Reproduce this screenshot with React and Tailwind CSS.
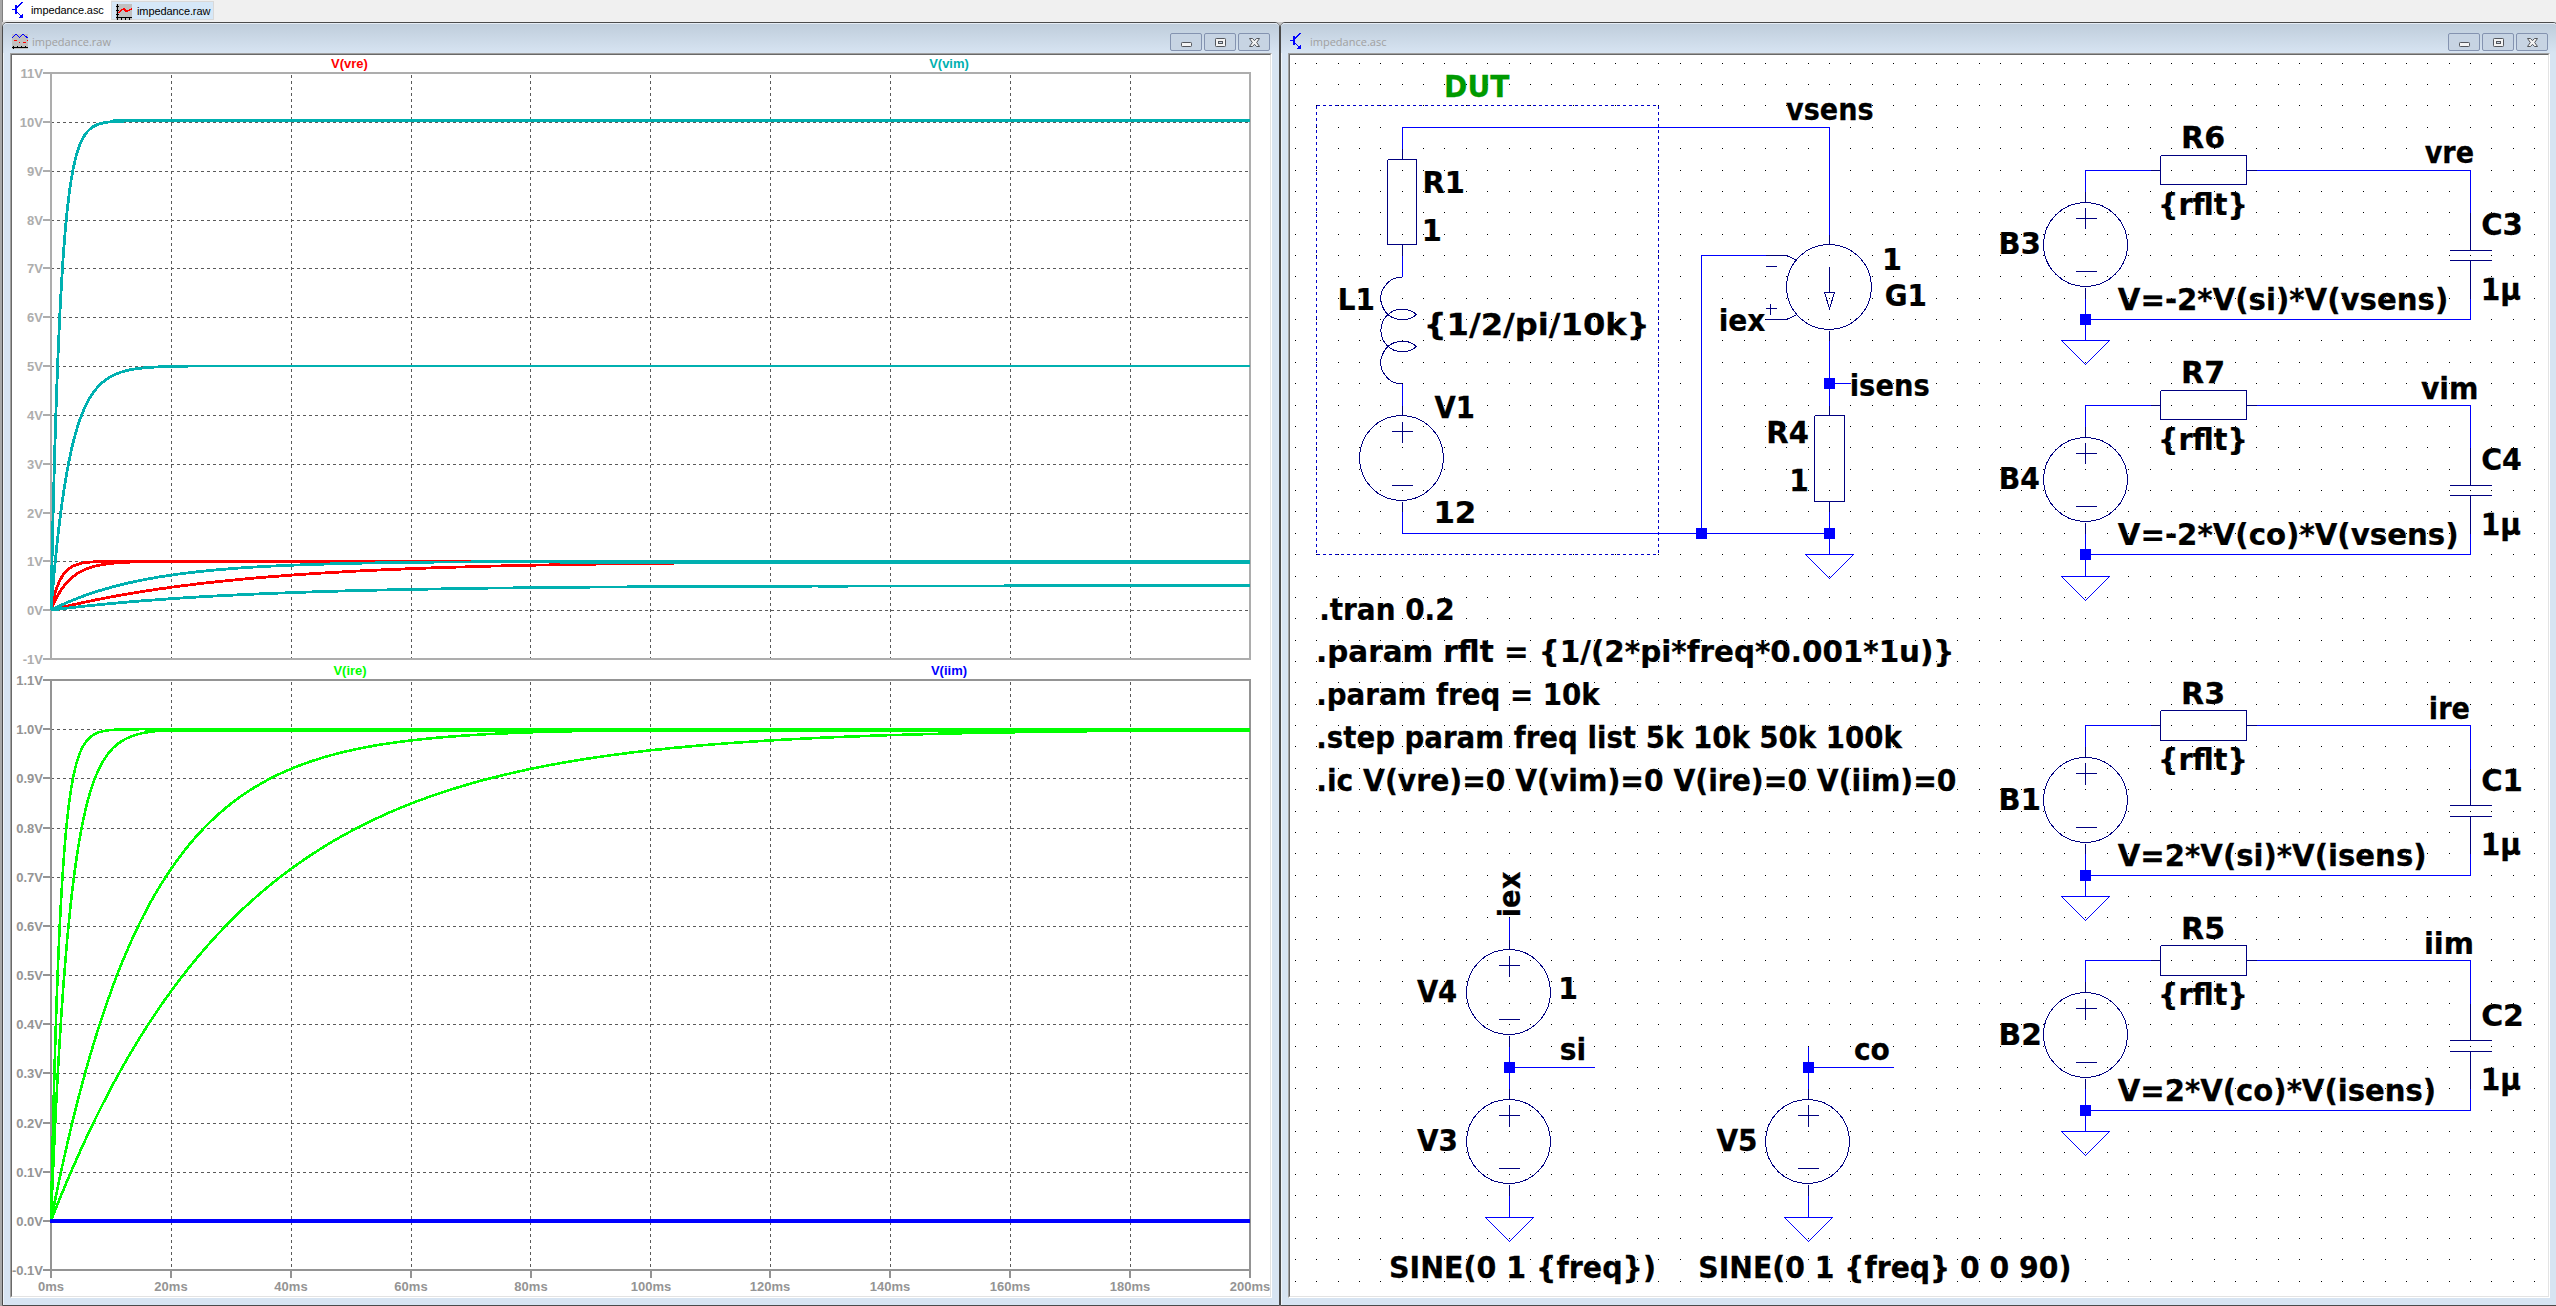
import React from "react";

/* ---------- shared helpers ---------- */

const PITCH = 21.3667;
const X = (u) => 1295.41 + PITCH * u;
const Y = (v) => 63.21 + PITCH * v;
const px = (u) => Math.floor(X(u)) + 0.5;
const py = (v) => Math.floor(Y(v)) + 0.5;

const NAVY = "#000080";
const BLUE = "#0000ff";
const LABEL_FONT = "'DejaVu Sans Condensed', 'DejaVu Sans', sans-serif";

const measureCtx = document.createElement("canvas").getContext("2d");

/* Bold schematic label whose ink spans x1..x2 */
function Label({ t, x1, x2, y, fill = "#000000", size = 31, vertical = false }) {
  measureCtx.font = `bold ${size}px ${LABEL_FONT}`;
  const m = measureCtx.measureText(t);
  const left = m.actualBoundingBoxLeft;
  const ink = left + m.actualBoundingBoxRight;
  const s = (x2 - x1) / ink;
  const place = vertical
    ? `translate(${y} ${x2 - left * s}) rotate(-90) scale(${s} 1)`
    : `translate(${x1 + left * s + 0.4} ${y - 0.4}) scale(${s} 1)`;
  return (
    <text
      transform={place}
      fill={fill}
      stroke={fill}
      strokeWidth="0.25"
      fontFamily={LABEL_FONT}
      fontWeight="bold"
      fontSize={size}
      xmlSpace="preserve"
    >
      {t}
    </text>
  );
}

/* ---------- icons ---------- */

function TransistorIcon() {
  return (
    <svg width="16" height="16" viewBox="0 0 16 16" fill="none" stroke="#0000ff" shapeRendering="crispEdges">
      <path d="M0 7.5H4" />
      <path d="M4 3V12" strokeWidth="2" />
      <path d="M5 5.5L10.5 0M5 10L11 16" />
      <path d="M10.5 11.5V15.5H7z" fill="#0000ff" stroke="none" />
    </svg>
  );
}

function WaveTabIcon() {
  return (
    <svg width="16" height="16" viewBox="0 0 16 16" fill="none" shapeRendering="crispEdges">
      <rect width="16" height="16" fill="#c0c0c0" />
      <path d="M1.5 0V16M0 13.5H16M0 2.5H3M0 6.5H3M0 10.5H3M5.5 13V16M9.5 13V16M13.5 13V16" stroke="#000" />
      <path d="M2.5 9L5.5 5.5L8 5L10.5 7.5L13 6.5L16 4.5" stroke="#ff0000" strokeWidth="1.5" />
    </svg>
  );
}

function WaveTitleIcon() {
  return (
    <svg width="16" height="16" viewBox="0 0 16 16" fill="none" shapeRendering="crispEdges">
      <rect y="1" width="16" height="15" fill="#c0c0c0" />
      <path d="M0 5L4 1L7.5 4.5L11 1L15.5 5" stroke="#0000ff" />
      <path d="M2 7.5H5M7 9.5H8M11 9.5H14M15 7.5H16" stroke="#ff0000" strokeWidth="1.4" />
      <path d="M0 14.5H16M1.5 13V16M5.5 13V15M9.5 13V15M13.5 13V15" stroke="#000" />
    </svg>
  );
}

function WindowButton({ kind }) {
  return (
    <div className="flex h-[18px] w-8 items-center justify-center rounded-[2px] border border-[#8493b0] bg-[#c7d4e3]">
      <svg width="14" height="12" viewBox="0 0 14 12" fill="#f4f4f4" stroke="#53565c">
        {kind === "min" && <rect x="2.5" y="6.5" width="10" height="4" rx="0.8" />}
        {kind === "max" && (
          <g>
            <rect x="2.5" y="2.5" width="10" height="8" rx="0.8" />
            <rect x="5.5" y="5.5" width="4" height="2" fill="#c7d4e3" />
          </g>
        )}
        {kind === "close" && (
          <path d="M2.5 2.5H5.5L7.5 4.7L9.5 2.5H12.5L9.7 6.5L12.5 10.5H9.5L7.5 8.3L5.5 10.5H2.5L5.3 6.5Z" strokeLinejoin="round" />
        )}
      </svg>
    </div>
  );
}

/* ---------- waveform viewer ---------- */

const tx = (ms) => 51 + ms * 5.995;
const topY = (v) => 610.1 - v * 48.83;
const botY = (v) => 1220.8 - v * 491.7;
const TAUS = [31.83, 15.92, 3.183, 1.592];

function curve(yOf, amp, tau) {
  let d = `M${tx(0)} ${yOf(0)}`;
  for (let t = 0.1; t <= 200.01; t += t < 20 ? 0.1 : 1) {
    d += `L${tx(t).toFixed(1)} ${yOf(amp * (1 - Math.exp(-t / tau))).toFixed(1)}`;
  }
  return d;
}

function Pane({ top, bottom, color, labels, step }) {
  const xs = [20, 40, 60, 80, 100, 120, 140, 160, 180];
  return (
    <g shapeRendering="crispEdges">
      {xs.map((t) => (
        <path key={t} d={`M${Math.floor(tx(t) + 0.3) + 0.5} ${top + 2}V${bottom}`} stroke="#5a5a5a" strokeDasharray="3 3" />
      ))}
      {labels.slice(1, -1).map((l, i) => (
        <path key={l} d={`M51 ${Math.round(top + step * (i + 1)) + 0.5}H1249`} stroke="#5a5a5a" strokeDasharray="3 3" />
      ))}
      <rect x="51" y={top} width="1199" height={bottom - top} fill="none" stroke={color} strokeWidth="2" />
      {labels.map((l, i) => (
        <g key={l}>
          <path d={`M43 ${Math.round(top + step * i)}H51`} stroke={color} strokeWidth="2" />
          <text x="43" y={top + step * i + 5} textAnchor="end" fill={color}>
            {l}
          </text>
        </g>
      ))}
    </g>
  );
}

function PlotView() {
  const topLabels = ["11V", "10V", "9V", "8V", "7V", "6V", "5V", "4V", "3V", "2V", "1V", "0V", "-1V"];
  const botLabels = ["1.1V", "1.0V", "0.9V", "0.8V", "0.7V", "0.6V", "0.5V", "0.4V", "0.3V", "0.2V", "0.1V", "0.0V", "-0.1V"];
  const vim = [0.5, 1, 5, 10.02];
  return (
    <svg
      className="block"
      width="1258"
      height="1241"
      viewBox="12 55 1258 1241"
      fontFamily="'Liberation Sans', Arial, sans-serif"
      fontWeight="bold"
      fontSize="13"
    >
      <Pane top={73} bottom={659} color="#adadad" labels={topLabels} step={586 / 12} />
      <Pane top={680} bottom={1270} color="#949494" labels={botLabels} step={590 / 12} />
      {[0, 20, 40, 60, 80, 100, 120, 140, 160, 180, 200].map((t) => (
        <g key={t}>
          <path d={`M${Math.round(tx(t))} 1270V1278`} stroke="#949494" strokeWidth="2" />
          <text x={Math.round(tx(t))} y="1291" textAnchor="middle" fill="#949494">
            {t}ms
          </text>
        </g>
      ))}
      <g textAnchor="middle">
        <text x="349.5" y="68" fill="#ff0000">V(vre)</text>
        <text x="949" y="68" fill="#00b0b0">V(vim)</text>
        <text x="350" y="675" fill="#00ff00">V(ire)</text>
        <text x="949" y="675" fill="#0000ff">V(iim)</text>
      </g>
      <g fill="none" strokeWidth="2.8" shapeRendering="crispEdges">
        {TAUS.map((tau) => (
          <path key={tau} d={curve(topY, 1, tau)} stroke="#ff0000" />
        ))}
        <path d="M114 561.5H780" stroke="#ff0000" strokeWidth="3" />
        {TAUS.map((tau, i) => (
          <path key={tau} d={curve(topY, vim[i], tau)} stroke="#00b0b0" />
        ))}
        <path d="M113 120.5H1250" stroke="#00b0b0" strokeWidth="3" />
        <path d="M560 562.5H1250" stroke="#00b0b0" strokeWidth="3" />
        {TAUS.map((tau) => (
          <path key={tau} d={curve(botY, 1, tau)} stroke="#00ff00" strokeWidth="2.6" />
        ))}
        <path d="M145 730H1250" stroke="#00ff00" strokeWidth="4" />
        <path d="M50 1221H1250" stroke="#0000ff" strokeWidth="4" />
      </g>
    </svg>
  );
}

/* ---------- schematic ---------- */

function Line({ pts, c = BLUE }) {
  return <polyline points={pts.map(([u, v]) => `${px(u)},${py(v)}`).join(" ")} fill="none" stroke={c} />;
}

function Junction({ u, v }) {
  return <rect x={px(u) - 5.5} y={py(v) - 5.5} width="11" height="11" fill={BLUE} />;
}

function Ground({ u, v }) {
  const x = px(u);
  const y = py(v);
  return <path d={`M${x - 24} ${y}H${x + 24}L${x} ${y + 24}Z`} fill="none" stroke={BLUE} />;
}

function Circle({ u, v }) {
  const l = px(u - 2);
  const r = px(u + 2) - 1;
  const t = py(v - 2);
  const b = py(v + 2) - 1;
  return <ellipse cx={(l + r) / 2} cy={(t + b) / 2} rx={(r - l) / 2} ry={(b - t) / 2} fill="none" stroke={NAVY} />;
}

/* Two-terminal source centred on (u, v) */
function Source({ u, v }) {
  return (
    <g>
      <Line c={NAVY} pts={[[u, v - 2.5], [u, v - 2]]} />
      <Circle u={u} v={v} />
      <Line c={NAVY} pts={[[u - 0.5, v - 1.25], [u + 0.5, v - 1.25]]} />
      <Line c={NAVY} pts={[[u, v - 1.75], [u, v - 0.75]]} />
      <Line c={NAVY} pts={[[u - 0.5, v + 1.25], [u + 0.5, v + 1.25]]} />
      <Line c={NAVY} pts={[[u, v + 2], [u, v + 2.5]]} />
    </g>
  );
}

function Box({ u1, v1, u2, v2 }) {
  return <Line c={NAVY} pts={[[u1, v1], [u2, v1], [u2, v2], [u1, v2], [u1, v1]]} />;
}

function VerticalResistor({ u, v }) {
  return (
    <g>
      <Line c={NAVY} pts={[[u, v], [u, v + 0.5]]} />
      <Box u1={u - 0.6875} v1={v + 0.5} u2={u + 0.6875} v2={v + 4.5} />
      <Line c={NAVY} pts={[[u, v + 4.5], [u, v + 5]]} />
    </g>
  );
}

function Inductor() {
  const p = (u, v) => `${X(u).toFixed(1)} ${(Y(v) + 0.2).toFixed(1)}`;
  const a = `A${PITCH} ${PITCH} 0 1 0 `;
  return (
    <path
      d={`M${p(5, 10)}${a}${p(5.7, 11.714)}M${p(5.7, 11.786)}${a}${p(5.7, 13.214)}M${p(5.7, 13.286)}${a}${p(5, 15)}`}
      fill="none"
      stroke={NAVY}
    />
  );
}

/* Behavioural source feeding an RC low-pass filter; v is the row of the top wire */
function FilterBlock({ v, source, res, net, netX, cap, formula, formulaX2 }) {
  const y = Y(v) - 170.05;
  return (
    <g>
      <g shapeRendering="crispEdges">
        <Line pts={[[37, v + 1], [37, v], [40, v]]} />
        <Line pts={[[45, v], [55, v], [55, v + 2]]} />
        <Line c={NAVY} pts={[[40, v], [40.5, v]]} />
        <Line c={NAVY} pts={[[44.5, v], [45, v]]} />
        <Box u1={40.5} v1={v - 0.6875} u2={44.5} v2={v + 0.6875} />
        <Line c={NAVY} pts={[[55, v + 2], [55, v + 3.75]]} />
        <Line c={NAVY} pts={[[54, v + 3.75], [56, v + 3.75]]} />
        <Line c={NAVY} pts={[[54, v + 4.25], [56, v + 4.25]]} />
        <Line c={NAVY} pts={[[55, v + 4.25], [55, v + 6]]} />
        <Line pts={[[55, v + 6], [55, v + 7], [37, v + 7]]} />
        <Source u={37} v={v + 3.5} />
        <Line pts={[[37, v + 6], [37, v + 8]]} />
        <Junction u={37} v={v + 7} />
        <Ground u={37} v={v + 8} />
      </g>
      <Label t={source} x1={2000.3} x2={2039} y={y + 254.7} />
      <Label t={res} x1={2182.8} x2={2223.2} y={y + 148.8} />
      <Label t="{rflt}" x1={2160.7} x2={2244.5} y={y + 215} />
      <Label t={net} x1={netX[0]} x2={netX[1]} y={y + 163.9} />
      <Label t={cap} x1={2481.8} x2={2521} y={y + 235.5} />
      <Label t="1µ" x1={2483.3} x2={2520} y={y + 300} />
      <Label t={formula} x1={2117.4} x2={formulaX2} y={y + 310.7} />
    </g>
  );
}

const DOTS = (() => {
  let d = "";
  for (let i = 0; i <= 58; i++) for (let j = 0; j <= 57; j++) d += `M${Math.floor(X(i))} ${py(j)}h1`;
  return d;
})();

const LABELS = [
  ["R1", 1424.2, 1463, 193],
  ["1", 1424.5, 1440, 241],
  ["L1", 1339.3, 1373, 310.8],
  ["{1/2/pi/10k}", 1426.7, 1646, 335.8],
  ["V1", 1434, 1473, 418],
  ["12", 1436.3, 1473.3, 523.8],
  ["vsens", 1785.7, 1872.7, 120.8],
  ["1", 1884.6, 1900, 270.8],
  ["G1", 1885.3, 1925, 306.8],
  ["iex", 1720.3, 1765, 331.8],
  ["isens", 1851.3, 1928.7, 396],
  ["R4", 1768, 1808, 443.8],
  ["1", 1791.9, 1807, 491.8],
  [".tran 0.2", 1320.8, 1451.8, 620.8],
  [".param rflt = {1/(2*pi*freq*0.001*1u)}", 1317.8, 1951.3, 662.8],
  [".param freq = 10k", 1317.8, 1601, 705.8],
  [".step param freq list 5k 10k 50k 100k", 1317.8, 1903, 748.8],
  [".ic V(vre)=0 V(vim)=0 V(ire)=0 V(iim)=0", 1317.8, 1956, 791.4],
  ["V4", 1416.5, 1456.4, 1002.8],
  ["1", 1560.8, 1576, 999],
  ["si", 1560.4, 1584.2, 1060.8],
  ["V3", 1416.5, 1456, 1151.8],
  ["V5", 1716, 1755.7, 1151.8],
  ["co", 1854.5, 1888.3, 1060.8],
  ["SINE(0 1 {freq})", 1390.7, 1653.8, 1278.6],
  ["SINE(0 1 {freq} 0 0 90)", 1700, 2069.3, 1278.6],
];

function SchematicView() {
  return (
    <svg className="block" width="1258" height="1241" viewBox="1290 55 1258 1241">
      <path d={DOTS} stroke="#000" shapeRendering="crispEdges" />
      <g shapeRendering="crispEdges">
        <path
          d={`M${px(1)} ${py(2)}H${px(17)}M${px(1)} ${py(23)}H${px(17)}M${px(1)} ${py(2)}V${py(23)}M${px(17)} ${py(2)}V${py(23)}`}
          stroke="#0000c8"
          strokeDasharray="3 3"
        />
        {/* device under test branch */}
        <Line pts={[[5, 4], [5, 3], [25, 3], [25, 8]]} />
        <VerticalResistor u={5} v={4} />
        <Line pts={[[5, 9], [5, 10]]} />
        <Inductor />
        <Line pts={[[5, 15], [5, 16]]} />
        <Source u={5} v={18.5} />
        <Line pts={[[5, 21], [5, 22], [25, 22]]} />

        {/* controlled current source */}
        <Line c={NAVY} pts={[[25, 8], [25, 8.5]]} />
        <Circle u={25} v={10.5} />
        <Line c={NAVY} pts={[[25, 9.5], [25, 10.75]]} />
        <Line c={NAVY} pts={[[24.75, 10.75], [25.25, 10.75], [25, 11.5], [24.75, 10.75]]} />
        <Line c={NAVY} pts={[[22, 9], [23, 9], [23.5, 9.25]]} />
        <Line c={NAVY} pts={[[22, 12], [23, 12], [23.5, 11.75]]} />
        <Line c={NAVY} pts={[[22, 9.5], [22.5, 9.5]]} />
        <Line c={NAVY} pts={[[22, 11.5], [22.5, 11.5]]} />
        <Line c={NAVY} pts={[[22.25, 11.25], [22.25, 11.75]]} />
        <Line pts={[[22, 9], [19, 9], [19, 22]]} />
        <Line c={NAVY} pts={[[25, 12.5], [25, 13]]} />
        <Line pts={[[25, 13], [25, 16]]} />
        <Line pts={[[25, 15], [26, 15]]} />
        <VerticalResistor u={25} v={16} />
        <Line pts={[[25, 21], [25, 23]]} />
        <Ground u={25} v={23} />
        <Junction u={25} v={15} />
        <Junction u={19} v={22} />
        <Junction u={25} v={22} />

        {/* excitation sources */}
        <Line pts={[[10, 40], [10, 41]]} />
        <Source u={10} v={43.5} />
        <Line pts={[[10, 46], [10, 48]]} />
        <Line pts={[[10, 47], [14, 47]]} />
        <Source u={10} v={50.5} />
        <Line pts={[[10, 53], [10, 54]]} />
        <Junction u={10} v={47} />
        <Ground u={10} v={54} />
        <Line pts={[[24, 46], [24, 48]]} />
        <Line pts={[[24, 47], [28, 47]]} />
        <Source u={24} v={50.5} />
        <Line pts={[[24, 53], [24, 54]]} />
        <Junction u={24} v={47} />
        <Ground u={24} v={54} />
      </g>

      <Label t="DUT" x1={1445.7} x2={1509} y={97} fill="#009a00" />
      {LABELS.map(([t, x1, x2, y]) => (
        <Label key={t + x1 + y} t={t} x1={x1} x2={x2} y={y} />
      ))}
      <Label t="iex" x1={871.7} x2={915.3} y={1520.3} vertical />

      <FilterBlock v={5} source="B3" res="R6" net="vre" netX={[2424.3, 2472.7]} cap="C3" formula="V=-2*V(si)*V(vsens)" formulaX2={2446.2} />
      <FilterBlock v={16} source="B4" res="R7" net="vim" netX={[2420.5, 2476]} cap="C4" formula="V=-2*V(co)*V(vsens)" formulaX2={2456.5} />
      <FilterBlock v={31} source="B1" res="R3" net="ire" netX={[2430.4, 2468.6]} cap="C1" formula="V=2*V(si)*V(isens)" formulaX2={2424.5} />
      <FilterBlock v={42} source="B2" res="R5" net="iim" netX={[2425.6, 2471.5]} cap="C2" formula="V=2*V(co)*V(isens)" formulaX2={2434} />
    </svg>
  );
}

/* ---------- window chrome ---------- */

function MdiWindow({ icon, title, children }) {
  return (
    <section className="flex h-[1284px] w-[1278px] shrink-0 flex-col rounded-t-[5px] border border-[#4a4a4a] bg-[#d7e4f2] shadow-[inset_1px_1px_0_#eef4fa]">
      <header className="flex h-[30px] items-center gap-1 rounded-t-[4px] border-t border-[#e6edf5] bg-gradient-to-b from-[#bfcddb] to-[#d7e4f2] pr-[9px] pl-[9px]">
        <div className="flex pt-[5px]">{icon}</div>
        <h2 className="flex-1 pt-[6px] font-['Open_Sans'] text-[11px] leading-4 text-[#a0a0a0]">{title}</h2>
        <div className="flex gap-0.5 pt-[6px]">
          <WindowButton kind="min" />
          <WindowButton kind="max" />
          <WindowButton kind="close" />
        </div>
      </header>
      <div className="mx-[7px] border border-t-[#a0a0a0] border-r-white border-b-white border-l-[#a0a0a0]">
        <div className="border border-t-[#696969] border-r-[#e3e3e3] border-b-[#e3e3e3] border-l-[#696969] bg-white">
          {children}
        </div>
      </div>
    </section>
  );
}

export default function App() {
  return (
    <div className="h-[1306px] w-[2556px] overflow-hidden border-l-2 border-[#a8a8a8] bg-[#f0f0f0]">
      <nav className="flex h-[22px] items-start border-l border-[#808080] font-['Liberation_Sans'] text-[11px] leading-[19px] tracking-[-0.1px] text-black">
        <div className="flex h-5 w-[108px] items-center gap-[3px] bg-white pl-[9px]">
          <TransistorIcon />
          <span>impedance.asc</span>
        </div>
        <div className="mt-px flex h-[19px] w-[103px] items-center gap-[5px] border border-[#d9d9d9] bg-[#d6e8f8] pt-[2px] pl-1">
          <WaveTabIcon />
          <span>impedance.raw</span>
        </div>
      </nav>
      <main className="flex bg-[#c8c8c8]">
        <MdiWindow icon={<WaveTitleIcon />} title="impedance.raw">
          <PlotView />
        </MdiWindow>
        <MdiWindow icon={<TransistorIcon />} title="impedance.asc">
          <SchematicView />
        </MdiWindow>
      </main>
    </div>
  );
}
